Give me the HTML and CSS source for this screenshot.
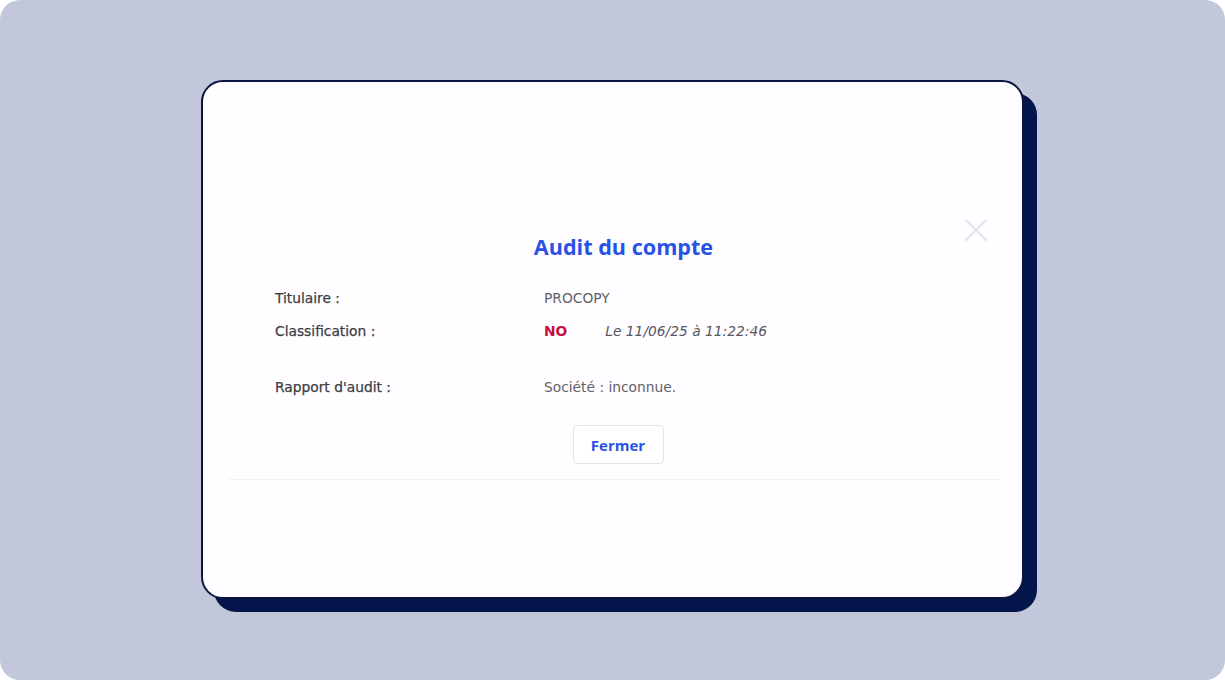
FILE: index.html
```html
<!DOCTYPE html>
<html lang="fr">
<head>
  <meta charset="UTF-8" />
  <meta name="viewport" content="width=device-width, initial-scale=1.0"/>
  <title>Audit du compte</title>
  <link rel="stylesheet" href="styles.css">
</head>
<body>
  <div class="frame">
    <div class="modal">
      <button class="close" aria-label="Fermer">
        <svg width="26" height="26" viewBox="0 0 26 26">
          <path d="M3 3 L23 23 M23 3 L3 23" stroke="#e7e5ed" stroke-width="2.4" stroke-linecap="round" fill="none"/>
        </svg>
      </button>

      <h1 class="title">Audit du compte</h1>

      <div class="rows">
        <div class="label">Titulaire :</div>
        <div class="value">PROCOPY</div>

        <div class="label">Classification :</div>
        <div class="value"><span class="flag">NO</span><em class="date">Le 11/06/25 à 11:22:46</em></div>

        <div class="label gap">Rapport d'audit :</div>
        <div class="value gap">Société : inconnue.</div>
      </div>

      <div class="actions">
        <button class="button">Fermer</button>
      </div>

      <div class="footer"></div>
    </div>
  </div>
</body>
</html>
```

FILE: styles.css
```css
body {
  margin: 0;
  background: #ffffff;
}

.frame {
  width: 1225px;
  height: 680px;
  background: #c3c7da;
  border-radius: 20px;
  display: flex;
  align-items: flex-start;
  padding: 80px 0 0 201px;
  box-sizing: border-box;
}

.modal {
  position: relative;
  width: 823px;
  height: 519px;
  box-sizing: border-box;
  padding-top: 150px;
  background: #fffdff;
  border: 2px solid #0b1540;
  border-radius: 22px;
  box-shadow: 13px 13px 0 #03154a;
}

/* close cross, top right corner */
.close {
  position: absolute;
  top: 135px;
  right: 33px;
  padding: 0;
  border: none;
  background: none;
  cursor: pointer;
}

.title {
  margin: 0;
  padding-left: 22px;
  text-align: center;
  font-family: "Open Sans", "Liberation Sans", sans-serif;
  font-size: 21.6px;
  font-weight: 700;
  line-height: 30px;
  color: #2752e3;
}

.rows {
  display: grid;
  grid-template-columns: 269px auto;
  row-gap: 13px;
  margin: 26px 0 0 72px;
  font-family: "DejaVu Sans", sans-serif;
  font-size: 13.8px;
  line-height: 20px;
}

.label {
  color: #3d3d44;
  -webkit-text-stroke: 0.25px #3d3d44;
}

.value {
  color: #616168;
}

.gap {
  margin-top: 23px;
}

.flag {
  color: #c4123f;
  font-weight: bold;
  margin-right: 38px;
}

.date {
  color: #58585f;
}

.actions {
  display: flex;
  justify-content: center;
  margin-top: 28px;
  padding-left: 11px;
}

.button {
  width: 91px;
  height: 39px;
  background: #ffffff;
  border: 1px solid #e3e2ea;
  border-radius: 5px;
  font-family: "Open Sans", "Liberation Sans", sans-serif;
  font-size: 15px;
  font-weight: 700;
  color: #2752e3;
  cursor: pointer;
}

.footer {
  margin: 15px 21px 0 25px;
  border-top: 1px solid #f4f1f6;
}
```
